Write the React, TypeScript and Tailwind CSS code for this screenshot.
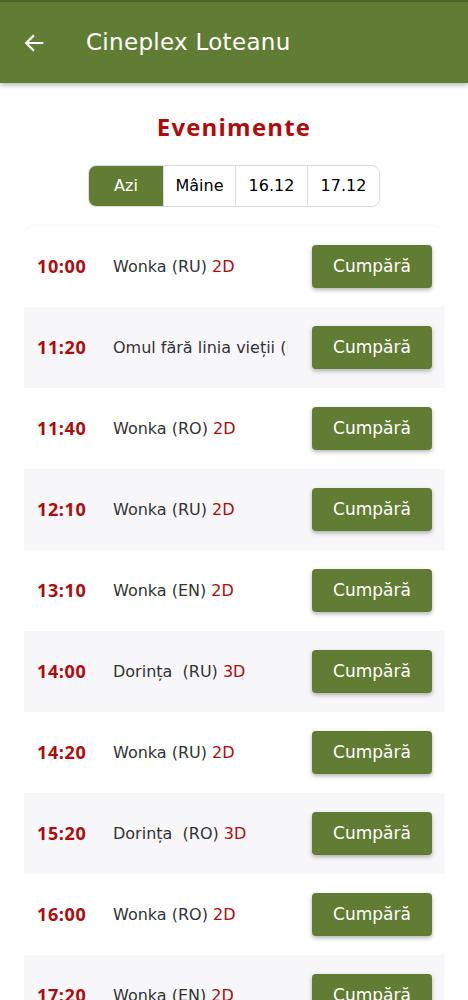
import React from "react";

const rows = [
  { t: "10:00", title: "Wonka (RU)", f: "2D" },
  { t: "11:20", title: "Omul fără linia vieții (RO)", f: "2D" },
  { t: "11:40", title: "Wonka (RO)", f: "2D" },
  { t: "12:10", title: "Wonka (RU)", f: "2D" },
  { t: "13:10", title: "Wonka (EN)", f: "2D" },
  { t: "14:00", title: "Dorința  (RU)", f: "3D" },
  { t: "14:20", title: "Wonka (RU)", f: "2D" },
  { t: "15:20", title: "Dorința  (RO)", f: "3D" },
  { t: "16:00", title: "Wonka (RO)", f: "2D" },
  { t: "17:20", title: "Wonka (EN)", f: "2D" },
];

const tabs = ["Azi", "Mâine", "16.12", "17.12"];

const dv = { fontFamily: "'DejaVu Sans', 'Noto Sans', sans-serif" };
const os = { fontFamily: "'Open Sans', 'Noto Sans', sans-serif" };

export default function App() {
  return (
    <div className="w-[468px] h-[1000px] overflow-hidden bg-white" style={dv}>
      <div className="h-[2px] bg-[#4d6629]" />
      <header className="h-[81px] bg-[#617d33] flex items-center shadow-[0_2px_5px_rgba(0,0,0,0.3)] relative z-10">
        <svg width="22" height="22" viewBox="0 0 24 24" className="ml-[23px]" fill="none" stroke="white" strokeWidth="2.4" strokeLinecap="square">
          <path d="M21 12H4M11 4.5L3.5 12L11 19.5" />
        </svg>
        <h1 className="ml-[41px] text-white text-[23px] tracking-[0.3px]">Cineplex Loteanu</h1>
      </header>
      <div className="flex flex-col items-center">
        <h2 className="mt-[26px] text-[#b00b0b] text-[24px] font-bold leading-[36px] tracking-[1.2px]" style={os}>Evenimente</h2>
        <div className="mt-[20px] flex h-[42px] rounded-[8px] border border-[#dedede] overflow-hidden">
          {tabs.map((x, i) => (
            <div
              key={x}
              className={
                i === 0
                  ? "w-[74px] flex items-center justify-center bg-[#617d33] text-white text-[16px]"
                  : "w-[72px] flex items-center justify-center border-l border-[#dedede] text-black text-[16px]"
              }
            >
              {x}
            </div>
          ))}
        </div>
      </div>
      <div className="mx-[24px] mt-[19px] rounded-t-[12px] overflow-hidden shadow-[0_-1px_2px_rgba(0,0,0,0.04)]">
        {rows.map((r, i) => (
          <div
            key={i}
            className={`h-[81px] flex items-center ${i % 2 === 1 ? "bg-[#f7f7f9]" : "bg-white"}`}
          >
            <div className="w-[89px] pl-[13px] text-[#b00b0b] text-[18px] font-bold tracking-[0.6px]" style={os}>{r.t}</div>
            <div className="w-[175px] whitespace-pre overflow-hidden text-[16px] text-[#333333]">
              {r.title} <span className="text-[#b00b0b]">{r.f}</span>
            </div>
            <button className="ml-[24px] w-[120px] h-[43px] rounded-[4px] bg-[#617d33] text-white text-[17px] shadow-[0_2px_4px_rgba(0,0,0,0.3)]">
              Cumpără
            </button>
          </div>
        ))}
      </div>
    </div>
  );
}
